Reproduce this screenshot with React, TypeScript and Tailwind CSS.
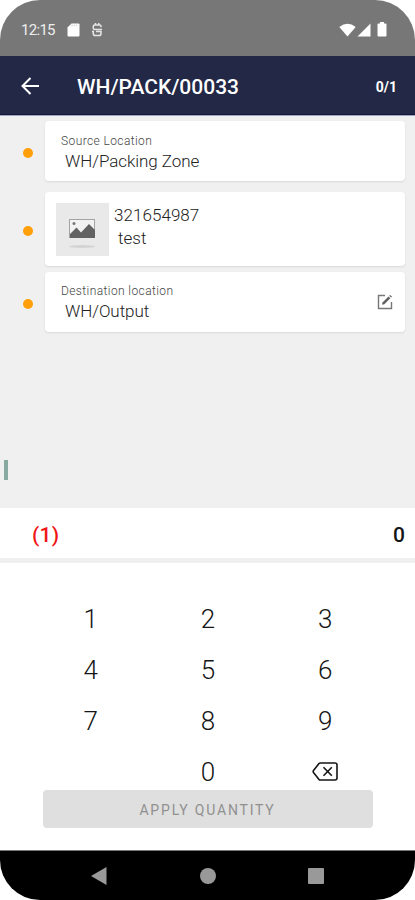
import React, { useState } from "react";

const KEYS = ["1", "2", "3", "4", "5", "6", "7", "8", "9", "", "0", "del"];

const StatusBar: React.FC = () => (
  <div className="flex h-14 items-center justify-between bg-[#777777] pt-[3px] pl-[21px] pr-[28px] text-white">
    <div className="flex items-center">
      <span className="w-[34px] pt-px text-[15px] leading-none tracking-[-0.7px] whitespace-nowrap text-[#eee]">12:15</span>
      <svg className="ml-[12px]" width="13" height="14" viewBox="0 0 13 14" fill="currentColor">
        <path d="M4.5 0.5H11.5Q12.5 0.5 12.5 1.5V12.5Q12.5 13.5 11.5 13.5H1.5Q0.5 13.5 0.5 12.5V4.5Z" />
        <path d="M5 1.6v1.6M7.3 1.6v1.6M9.6 1.6v1.6" stroke="#bbb" strokeWidth="0.8" />
      </svg>
      <svg className="ml-[11px]" width="12" height="14" viewBox="0 0 12 14" fill="none" stroke="#e6e6e6" strokeWidth="1.5">
        <path d="M10 4.2V3.2Q10 2 8.8 2H3.7Q2.3 2 2.3 3.4V5.2Q2.3 6.6 3.7 6.6H11M1 8.6H2.3V10.4Q2.3 12.5 4.4 12.5H7.9Q10 12.5 10 10.4V8.6H5M4.5 0V2M7.7 0V2" />
      </svg>
    </div>
    <div className="flex items-center">
      <svg width="17" height="14" viewBox="0 0 17 14" fill="currentColor">
        <path d="M0.3 3.9Q8.5 -2.6 16.7 3.9L8.5 13.6Z" />
      </svg>
      <svg className="ml-px" width="14" height="14" viewBox="0 0 14 14" fill="currentColor">
        <path d="M13.5 0.5V13.5H0.5Z" />
      </svg>
      <svg className="ml-[6px]" width="10" height="15" viewBox="0 0 10 15" fill="currentColor">
        <path d="M3 0H7V1.5H8.5Q9.5 1.5 9.5 2.5V13.5Q9.5 14.5 8.5 14.5H1.5Q0.5 14.5 0.5 13.5V2.5Q0.5 1.5 1.5 1.5H3Z" />
      </svg>
    </div>
  </div>
);

const Row: React.FC<{ className: string; children: React.ReactNode }> = ({ className, children }) => (
  <div className="flex items-center">
    <div className="ml-[23px] mr-[12px] mt-1 h-[10px] w-[10px] shrink-0 rounded-full bg-[#ff9f0a]" />
    <div className={`w-[360px] rounded-[4px] bg-white shadow-[0_1px_2px_rgba(0,0,0,0.1)] ${className}`}>{children}</div>
  </div>
);

const ImagePlaceholder: React.FC = () => (
  <svg width="53" height="53" viewBox="0 0 53 53">
    <rect width="53" height="53" fill="#e9e9e9" />
    <rect x="13.5" y="16.5" width="25" height="18" fill="#f2f2f2" stroke="#a3a3a3" />
    <circle cx="18" cy="20.5" r="1.5" fill="#777" />
    <path d="M14 35V31L20.5 24.5L25 29.5L33 21L39 27V35Z" fill="#626262" />
    <ellipse cx="26" cy="43.5" rx="13" ry="1.5" fill="#d3d3d3" />
  </svg>
);

const EditIcon: React.FC = () => (
  <svg width="16" height="16" viewBox="0 0 16 16" fill="none">
    <path d="M8 1.5H1.5V14.5H14.5V8" stroke="#777" strokeWidth="1.4" />
    <path d="M5 10.8L5.5 8.5L11.5 2.5L13.3 4.3L7.3 10.3Z" fill="#606060" />
    <path d="M12.2 1.8L13.2 0.9L15 2.7L14 3.6Z" fill="#606060" />
  </svg>
);

const BackspaceIcon: React.FC = () => (
  <svg width="26" height="19" viewBox="0 0 26 19" fill="none" stroke="#151515" strokeWidth="1.6">
    <path d="M8.3 1H23Q25 1 25 3V16Q25 18 23 18H8.3Q7.5 18 7 17.4L1.5 10.5Q0.8 9.5 1.5 8.5L7 1.6Q7.5 1 8.3 1Z" />
    <path d="M11.5 5.3L19.8 13.7M19.8 5.3L11.5 13.7" />
  </svg>
);

const App: React.FC = () => {
  const [quantity, setQuantity] = useState("0");

  const onKey = (key: string) => {
    if (key === "del") {
      setQuantity((q) => q.slice(0, -1) || "0");
      return;
    }
    setQuantity((q) => (q === "0" ? key : q + key));
  };

  return (
    <div className="h-[900px] w-[415px] bg-white font-['Roboto',sans-serif]">
      <div className="flex h-full flex-col overflow-hidden rounded-[40px] bg-white">
        <StatusBar />

        <header className="flex h-[59px] items-center border-b border-[#11163a] bg-[#222845] pl-[21px] pr-[18px] pt-[3px] text-white">
          <svg className="-mt-[2px]" width="19" height="18" viewBox="0 0 19 18" fill="none" stroke="currentColor" strokeWidth="2">
            <path d="M18 9H2M9.5 1L1.5 9L9.5 17" />
          </svg>
          <h1 className="ml-[37px] pt-[2px] text-[21px] font-medium leading-none">WH/PACK/00033</h1>
          <span className="ml-auto text-[14px] font-bold leading-none">0/1</span>
        </header>

        <main className="h-[393px] border-t border-[#a5a6bd] bg-[#f0f0f0] pt-[5px] text-[#222]">
          <Row className="h-[60px] pl-4 pt-[13px]">
            <p className="text-[12px] font-[350] leading-[14px] tracking-[0.4px] text-[#444]">Source Location</p>
            <p className="mt-[3px] pl-1 text-[17px] font-[350] leading-[20px] tracking-[-0.05px]">WH/Packing Zone</p>
          </Row>
          <div className="h-[11px]" />
          <Row className="flex h-[74px] pl-[11px] pt-[11px]">
            <ImagePlaceholder />
            <div className="ml-[5px] mt-[2px] text-[17px] font-[350] leading-[20px] tracking-[0.05px]">
              <p>321654987</p>
              <p className="mt-[3px] pl-1">test</p>
            </div>
          </Row>
          <div className="h-[6px]" />
          <Row className="flex h-[60px] items-center justify-between pl-4 pr-3">
            <div className="pt-px">
              <p className="text-[12px] font-[350] leading-[14px] tracking-[0.4px] text-[#444]">Destination location</p>
              <p className="mt-[3px] pl-1 text-[17px] font-[350] leading-[20px] tracking-[-0.05px]">WH/Output</p>
            </div>
            <EditIcon />
          </Row>
          <div className="ml-1 mt-[128px] h-[20px] w-[4px] bg-[#86aa9f]" />
        </main>

        <div className="flex h-[55px] items-center justify-between border-b-[5px] border-[#f0f0f0] pl-[32px] pr-[10px] pt-[4px] text-[21px] font-medium leading-none">
          <span className="tracking-[0.3px] text-[#f01414]">(1)</span>
          <span className="text-[#151515]">{quantity}</span>
        </div>

        <section className="flex h-[287px] flex-col items-center pt-[30px]">
          <div className="ml-px grid w-[352px] grid-cols-3 text-[#151515]">
            {KEYS.map((key, i) =>
              key ? (
                <button
                  key={key}
                  onClick={() => onKey(key)}
                  className="flex h-[51px] items-center justify-center text-[26px] font-[350] leading-none"
                >
                  {key === "del" ? <BackspaceIcon /> : key}
                </button>
              ) : (
                <span key={i} />
              )
            )}
          </div>
          <button
            disabled
            className="-mt-[7px] h-[38px] w-[330px] shrink-0 rounded-[4px] bg-[#dfdfdf] pt-[2px] text-[14px] tracking-[1.8px] text-[#909090]"
          >
            APPLY QUANTITY
          </button>
        </section>

        <nav className="flex h-[50px] items-center border-t border-[#777] bg-black pl-[91px]">
          <svg width="16" height="18" viewBox="0 0 16 18" fill="#999">
            <path d="M15.5 0V18L0 9Z" />
          </svg>
          <div className="ml-[93px] h-4 w-4 rounded-full bg-[#999]" />
          <div className="ml-[92px] h-4 w-4 rounded-[1px] bg-[#999]" />
        </nav>
      </div>
    </div>
  );
};

export default App;
